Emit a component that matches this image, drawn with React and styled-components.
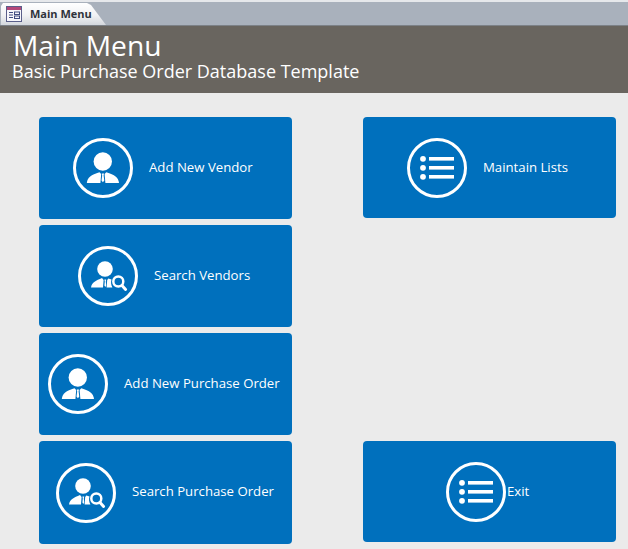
import styled, { createGlobalStyle } from "styled-components";

const GlobalStyle = createGlobalStyle`
  html, body {
    margin: 0;
    padding: 0;
    background-color: #ebebeb;
  }
`

const Page = styled('div')`
  width: 628px;
  height: 549px;
  overflow: hidden;
  background-color: #ebebeb;
  font-family: "Open Sans", sans-serif;
`

const TabBar = styled('div')`
  display: flex;
  align-items: flex-end;
  height: 26px;
  box-sizing: border-box;
  padding-top: 3px;
  padding-left: 1px;
  background: linear-gradient(#e6e8eb 0, #e6e8eb 2px, #a9b1bc 2px);
  border-bottom: 1px solid #7c8187;
`

const Tab = styled('div')`
  display: flex;
  align-items: center;
  gap: 8px;
  width: 105px;
  height: 22px;
  box-sizing: border-box;
  padding-left: 5px;
  padding-bottom: 1px;
  background: linear-gradient(#ffffff, #f1f2f4 55%, #d3d7dc);
  clip-path: polygon(0 3px, 2px 0, 86px 0, 90px 2px, 100% 100%, 0 100%);
  color: #2f333b;
  font-size: 11px;
  font-weight: 700;
`

const Header = styled('header')`
  height: 67px;
  box-sizing: border-box;
  padding: 3px 13px 0;
  background-color: #69655f;
  color: #ffffff;
`

const Title = styled('div')`
  font-size: 28.2px;
  line-height: 32px;
`

const Subtitle = styled('div')`
  font-size: 18px;
  line-height: 20px;
  margin-left: -1px;
`

const Board = styled('main')`
  display: grid;
  grid-template-columns: 253px 253px;
  grid-template-rows: repeat(4, 102px);
  column-gap: 71px;
  row-gap: 6px;
  padding: 24px 0 0 39px;
`

const MenuButton = styled('button')`
  display: flex;
  align-items: center;
  gap: ${p => p.$gap ?? 16}px;
  grid-column: ${p => p.$column};
  grid-row: ${p => p.$row};
  height: ${p => p.$height ?? 102}px;
  padding: 0 0 0 ${p => p.$inset}px;
  border: 0;
  border-radius: 4px;
  background-color: #0070bd;
  color: #ffffff;
  font-family: inherit;
  font-size: 13.2px;
  cursor: pointer;
`

const ButtonLabel = styled('span')`
  margin-bottom: ${p => p.$raise}px;
`

const IconRing = styled('svg')`
  flex: none;
  width: 60px;
  height: 60px;
`

const Ring = () => (
  <circle cx="30" cy="30" r="28.5" fill="none" stroke="#ffffff" strokeWidth="3" />
)

const PersonIcon = () => (
  <IconRing viewBox="0 0 60 60">
    <Ring />
    <circle cx="29.8" cy="23.5" r="9.2" fill="#ffffff" />
    <path d="M13.8 45 C14.5 39 18 37 26.5 34.2 L28.2 36 L27.4 45 Z" fill="#ffffff" />
    <path d="M46 45 C45.3 39 41.8 37 33.3 34.2 L31.6 36 L32.4 45 Z" fill="#ffffff" />
    <path d="M28.8 35.4 H31 L30.6 37.4 L31.3 42.6 L29.9 44.2 L28.5 42.6 L29.2 37.4 Z" fill="#ffffff" />
  </IconRing>
)

const PersonSearchIcon = () => (
  <IconRing viewBox="0 0 60 60">
    <Ring />
    <circle cx="27" cy="23" r="7.8" fill="#ffffff" />
    <path d="M13 41.5 C14 36 18 34.5 24 32 L25.6 34 L25 41.5 Z" fill="#ffffff" />
    <path d="M28.6 41.5 L29.2 34 L30.4 32.4 L33.5 33.4 C32.6 36 33 38.6 34.4 41.5 Z" fill="#ffffff" />
    <path d="M26.4 33.6 H28.2 L27.8 35.4 L28.2 39.5 L27.3 41 L26.4 39.5 L26.8 35.4 Z" fill="#ffffff" />
    <circle cx="40.3" cy="35.5" r="5" fill="#0070bd" stroke="#ffffff" strokeWidth="2.5" />
    <path d="M44 39.5 L47.6 43.4" stroke="#ffffff" strokeWidth="3" strokeLinecap="round" />
  </IconRing>
)

const ListIcon = () => (
  <IconRing viewBox="0 0 60 60">
    <Ring />
    <circle cx="16" cy="20.8" r="2.9" fill="#ffffff" />
    <circle cx="16" cy="29.8" r="2.9" fill="#ffffff" />
    <circle cx="16" cy="38.8" r="2.9" fill="#ffffff" />
    <rect x="22" y="19" width="25" height="3.6" fill="#ffffff" />
    <rect x="22" y="28" width="25" height="3.6" fill="#ffffff" />
    <rect x="22" y="37" width="25" height="3.6" fill="#ffffff" />
  </IconRing>
)

const FormIcon = () => (
  <svg width="16" height="16" viewBox="0 0 16 16">
    <rect x="0.5" y="0.5" width="15" height="15" fill="#f7f7fb" stroke="#5a5f8a" />
    <rect x="1" y="1" width="14" height="3" fill="#b5487a" />
    <path d="M3 6.5 H7 M3 9 H7 M3 11.5 H7" stroke="#3f4a80" strokeWidth="1" />
    <rect x="8.5" y="6" width="5" height="2.5" fill="none" stroke="#3f4a80" />
    <rect x="8.5" y="10" width="5" height="2.5" fill="none" stroke="#3f4a80" />
  </svg>
)

const menu = [
  { label: 'Add New Vendor', Icon: PersonIcon, column: 1, row: 1, inset: 34, raise: 2 },
  { label: 'Search Vendors', Icon: PersonSearchIcon, column: 1, row: 2, inset: 39, raise: 2 },
  { label: 'Add New Purchase Order', Icon: PersonIcon, column: 1, row: 3, inset: 9, raise: 2 },
  { label: 'Search Purchase Order', Icon: PersonSearchIcon, column: 1, row: 4, inset: 17, height: 103, raise: 4 },
  { label: 'Maintain Lists', Icon: ListIcon, column: 2, row: 1, inset: 44, height: 101, raise: 2 },
  { label: 'Exit', Icon: ListIcon, column: 2, row: 4, inset: 83, height: 101, gap: 1, raise: 2 },
]

export default function App() {
  return (
    <Page>
      <GlobalStyle />
      <TabBar>
        <Tab>
          <FormIcon />
          Main Menu
        </Tab>
      </TabBar>
      <Header>
        <Title>Main Menu</Title>
        <Subtitle>Basic Purchase Order Database Template</Subtitle>
      </Header>
      <Board>
        {menu.map(({ label, Icon, column, row, inset, height, gap, raise }) => (
          <MenuButton key={label} $column={column} $row={row} $inset={inset} $height={height} $gap={gap}>
            <Icon />
            <ButtonLabel $raise={raise}>{label}</ButtonLabel>
          </MenuButton>
        ))}
      </Board>
    </Page>
  )
}
